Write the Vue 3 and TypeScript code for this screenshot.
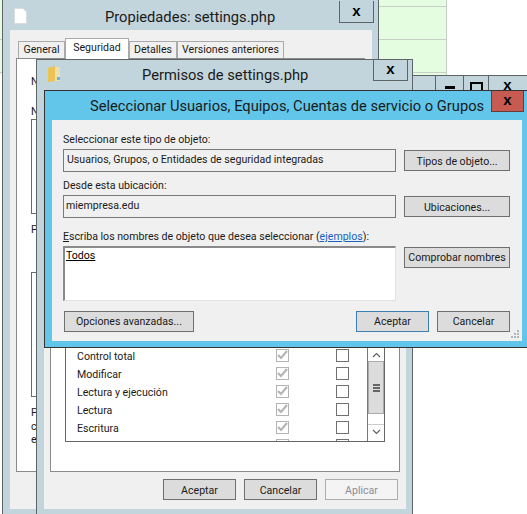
<script setup lang="ts">
const perms = [
  { name: 'Control total' },
  { name: 'Modificar' },
  { name: 'Lectura y ejecución' },
  { name: 'Lectura' },
  { name: 'Escritura' },
]
const sideLetters = [
  { text: 'N', top: 78 },
  { text: 'N', top: 108 },
  { text: 'P', top: 226 },
  { text: 'P', top: 409 },
  { text: 'c', top: 423 },
  { text: 'e', top: 436 },
]
</script>

<template>
  <div class="desktop">
    <!-- hoja de calculo detras -->
    <div class="sheet"></div>
    <div class="sheet-left"></div>

    <!-- ventana de fondo -->
    <div class="win back">
      <div class="back-btn min"><span class="min-glyph"></span></div>
      <div class="back-btn max"><span class="max-glyph"></span></div>
      <div class="back-btn cls">x</div>
    </div>

    <!-- Propiedades -->
    <div class="win props">
      <svg class="file-icon" width="13" height="16" viewBox="0 0 13 16">
        <path d="M.5.5h8.5l3.5 3.5v11.5h-12z" fill="#fff" stroke="#d8dee0" />
      </svg>
      <div class="title props-title">Propiedades: settings.php</div>
      <div class="close props-close">x</div>
      <div class="client props-client">
        <div class="tabs">
          <div class="tab t1">General</div>
          <div class="tab t2 active">Seguridad</div>
          <div class="tab t3">Detalles</div>
          <div class="tab t4">Versiones anteriores</div>
        </div>
        <div class="tab-panel"></div>
      </div>
      <div class="side-box b1"></div>
      <div class="side-box b2"></div>
      <span v-for="(l, i) in sideLetters" :key="i" class="side-letter" :style="{ top: l.top + 'px' }">{{ l.text }}</span>
    </div>

    <!-- Permisos -->
    <div class="win perm">
      <svg class="folder-icon" width="14" height="16" viewBox="0 0 14 16">
        <path d="M1 2l7-2v15l-7 1z" fill="#ecc355" />
        <path d="M8 1h5v14H8z" fill="#ecdfae" />
        <path d="M10 11h3v3h-3z" fill="#6fb4d8" />
      </svg>
      <div class="title perm-title">Permisos de settings.php</div>
      <div class="close perm-close">x</div>
      <div class="client perm-client">
        <div class="perm-panel">
          <div class="perm-list">
            <div class="rows">
              <div v-for="p in perms" :key="p.name" class="row">
                <span class="row-name">{{ p.name }}</span>
                <span class="check on">
                  <svg width="11" height="10" viewBox="0 0 11 10"><path d="M1 5l3 3 6-7" fill="none" stroke="#b4b4b4" stroke-width="2.2" /></svg>
                </span>
                <span class="check"></span>
              </div>
              <div class="row cut">
                <span class="row-name"></span>
                <span class="check on"></span>
                <span class="check"></span>
              </div>
            </div>
            <div class="scroll">
              <div class="arrow">
                <svg width="9" height="6" viewBox="0 0 9 6"><path d="M1 5l3.5-3.5L8 5" fill="none" stroke="#606060" stroke-width="1.2" /></svg>
              </div>
              <div class="thumb"><span></span><span></span><span></span></div>
              <div class="track"></div>
              <div class="arrow">
                <svg width="9" height="6" viewBox="0 0 9 6"><path d="M1 1l3.5 3.5L8 1" fill="none" stroke="#606060" stroke-width="1.2" /></svg>
              </div>
            </div>
          </div>
        </div>
        <div class="perm-buttons">
          <button class="btn w73 low">Aceptar</button>
          <button class="btn w73 low">Cancelar</button>
          <button class="btn w73 low disabled">Aplicar</button>
        </div>
      </div>
    </div>

    <!-- Seleccionar -->
    <div class="win pick">
      <div class="title pick-title">Seleccionar Usuarios, Equipos, Cuentas de servicio o Grupos</div>
      <div class="close pick-close">x</div>
      <div class="pick-client">
        <div class="pick-grid">
          <label class="lbl">Seleccionar este tipo de objeto:</label>
          <div class="field-row">
            <div class="field indent">Usuarios, Grupos, o Entidades de seguridad integradas</div>
            <button class="btn side low">Tipos de objeto...</button>
          </div>
          <label class="lbl">Desde esta ubicación:</label>
          <div class="field-row">
            <div class="field">miempresa.edu</div>
            <button class="btn side low">Ubicaciones...</button>
          </div>
          <label class="lbl third"><u>E</u>scriba los nombres de objeto que desea seleccionar (<a class="link">ejemplos</a>):</label>
          <div class="field-row tall">
            <div class="textarea"><u>Todos</u></div>
            <button class="btn side">Comprobar nombres</button>
          </div>
          <div class="pick-foot">
            <button class="btn adv">Opciones avanzadas...</button>
            <div class="foot-right">
              <button class="btn w73 focus">Aceptar</button>
              <button class="btn w73">Cancelar</button>
            </div>
          </div>
        </div>
        <svg class="grip" width="9" height="9" viewBox="0 0 9 9" fill="#b5b5b5">
          <rect x="6" y="0" width="2" height="2" /><rect x="3" y="3" width="2" height="2" /><rect x="6" y="3" width="2" height="2" />
          <rect x="0" y="6" width="2" height="2" /><rect x="3" y="6" width="2" height="2" /><rect x="6" y="6" width="2" height="2" />
        </svg>
      </div>
    </div>
  </div>
</template>

<style scoped>
.desktop {
  position: relative;
  width: 527px;
  height: 514px;
  overflow: hidden;
  background: #fff;
  font-family: Roboto, "Liberation Sans", sans-serif;
  font-size: 10.6px;
  color: #1a1a1a;
}
.sheet {
  position: absolute;
  left: 378px;
  top: -1px;
  width: 68px;
  height: 76px;
  border-right: 1px solid #c8cec8;
  background: linear-gradient(#c8cec8, #c8cec8) 0 7px / 100% 1px no-repeat,
    linear-gradient(#c8cec8, #c8cec8) 0 40px / 100% 1px no-repeat,
    linear-gradient(#c8cec8, #c8cec8) 0 73px / 100% 1px no-repeat,
    #e4fde0;
}
.sheet-left {
  position: absolute;
  left: 0;
  top: 0;
  width: 2px;
  height: 75px;
  background: linear-gradient(#c8cec8, #c8cec8) 0 39px / 100% 1px no-repeat,
    linear-gradient(#c8cec8, #c8cec8) 0 72px / 100% 1px no-repeat,
    #e4fde0;
}
.win {
  position: absolute;
  box-sizing: border-box;
  background: #c3d5dc;
  border: 1px solid #5f6468;
}
.back {
  left: 411px;
  top: 75px;
  width: 130px;
  height: 40px;
}
.back-btn {
  position: absolute;
  top: 0;
  height: 30px;
  box-sizing: border-box;
  border-left: 1px solid #5f6468;
  display: flex;
  justify-content: center;
  font-family: "Liberation Sans", sans-serif;
  font-weight: 700;
  font-size: 15px;
  line-height: 18px;
  color: #000;
}
.min { left: 23px; width: 28px; }
.max { left: 51px; width: 26px; }
.cls { left: 76px; width: 39px; padding-right: 1px; }
.min-glyph { width: 10px; height: 3px; background: #000; margin-top: 10px; }
.max-glyph { width: 9px; height: 6px; border: 2px solid #000; margin-top: 6px; }
.props {
  left: 2px;
  top: -4px;
  width: 377px;
  height: 530px;
}
.perm {
  left: 36px;
  top: 59px;
  width: 377px;
  height: 470px;
}
.pick {
  left: 44px;
  top: 90px;
  width: 490px;
  height: 258px;
  background: #62c6ea;
  border-color: #333;
}
.file-icon {
  position: absolute;
  left: 11px;
  top: 11px;
}
.folder-icon {
  position: absolute;
  left: 10px;
  top: 6px;
}
.title {
  position: absolute;
  top: 0;
  font-size: 14.7px;
  line-height: 20px;
  white-space: nowrap;
  color: #1a1a1a;
}
.props-title { left: 102px; top: 10px; }
.perm-title { left: 105px; top: 5px; }
.pick-title { left: 45px; top: 5px; }
.close {
  position: absolute;
  box-sizing: border-box;
  background: #c3d5dc;
  border: 1px solid #5f6468;
  border-top: 0;
  display: flex;
  align-items: center;
  justify-content: center;
  font-family: "Liberation Sans", sans-serif;
  font-size: 15px;
  font-weight: 700;
  color: #000;
  padding-bottom: 3px;
}
.props-close { left: 336px; top: 4px; width: 35px; height: 22px; }
.perm-close { left: 336px; top: -1px; width: 35px; height: 22px; border-top: 1px solid #5f6468; }
.pick-close {
  left: 446px;
  top: 0;
  width: 33px;
  height: 21px;
  background: #c75b52;
  border-color: #6a3a36;
}
.client {
  position: absolute;
  box-sizing: border-box;
  background: #f0f0f0;
}
.props-client {
  left: 7px;
  top: 33px;
  width: 362px;
  height: 479px;
}
.tabs {
  position: absolute;
  left: 0;
  top: 0;
}
.tab {
  position: absolute;
  box-sizing: border-box;
  top: 11px;
  height: 18px;
  background: #f0f0f0;
  border: 1px solid #aaa;
  border-bottom: 0;
  text-align: center;
  line-height: 16px;
  white-space: nowrap;
}
.t1 { left: 8px; width: 47px; }
.t2 { left: 55px; width: 64px; top: 8px; height: 21px; background: #fff; z-index: 1; line-height: 18px; }
.t3 { left: 119px; width: 48px; }
.t4 { left: 167px; width: 107px; }
.tab-panel {
  position: absolute;
  box-sizing: border-box;
  left: 6px;
  top: 28px;
  width: 349px;
  height: 414px;
  background: #fff;
  border: 1px solid #8a8a8a;
}
.side-box {
  position: absolute;
  box-sizing: border-box;
  left: 28px;
  width: 20px;
  border: 1px solid #6a6a6a;
  background: #fff;
}
.b1 { top: 122px; height: 95px; }
.b2 { top: 275px; height: 125px; }
.side-letter {
  position: absolute;
  left: 28px;
  line-height: 14px;
  background: #fff;
}
.perm-client {
  left: 7px;
  top: 31px;
  width: 362px;
  height: 418px;
}
.perm-panel {
  position: absolute;
  box-sizing: border-box;
  left: 6px;
  top: 0;
  width: 350px;
  height: 381px;
  background: #fff;
  border: 1px solid #8a8a8a;
  border-top: 0;
}
.perm-list {
  position: absolute;
  box-sizing: border-box;
  left: 14px;
  right: 14px;
  top: 0;
  height: 351px;
  border: 1px solid #666;
  border-top: 0;
  display: flex;
  justify-content: space-between;
  overflow: hidden;
}
.rows {
  padding: 256px 0 0 11px;
  flex: 1;
  min-width: 0;
}
.row {
  display: flex;
  align-items: center;
  height: 18px;
}
.row-name {
  width: 199px;
}
.check {
  box-sizing: border-box;
  width: 13px;
  height: 13px;
  border: 1px solid #707070;
  background: #fff;
  margin-right: 47px;
  display: flex;
  align-items: center;
  justify-content: center;
  position: relative;
  top: -1px;
}
.check:last-child {
  margin-right: 0;
}
.check.on {
  border-color: #b4b4b4;
}
.scroll {
  flex: none;
  width: 17px;
  display: flex;
  flex-direction: column;
  border-left: 1px solid #777;
  padding-top: 257px;
  box-sizing: border-box;
  background: #fff;
}
.arrow {
  height: 13px;
  display: flex;
  align-items: center;
  justify-content: center;
  flex: none;
}
.thumb {
  flex: none;
  height: 53px;
  box-sizing: border-box;
  background: #dcdcdc;
  border: 1px solid #aaa;
  display: flex;
  flex-direction: column;
  align-items: center;
  justify-content: center;
  gap: 1px;
}
.thumb span {
  width: 7px;
  height: 2px;
  background: #666;
}
.track {
  flex: none;
  height: 10px;
  border-bottom: 1px solid #ccc;
}
.perm-buttons {
  position: absolute;
  right: 8px;
  bottom: 9px;
  display: flex;
  gap: 8px;
}
.btn {
  box-sizing: border-box;
  height: 21px;
  padding: 0;
  background: #dcdcdc;
  border: 1px solid #707070;
  border-radius: 0;
  font: inherit;
  color: #1a1a1a;
  white-space: nowrap;
}
.low { padding-top: 2px; }
.w73 { width: 73px; }
.disabled {
  background: #f4f4f4;
  border-color: #adadad;
  color: #8c8c9a;
}
.focus { border-color: #3c7fb1; }
.pick-client {
  position: absolute;
  box-sizing: border-box;
  left: 7px;
  top: 29px;
  width: 470px;
  height: 221px;
  background: #f0f0f0;
}
.pick-grid {
  padding: 11px 12px 0 11px;
  display: flex;
  flex-direction: column;
}
.lbl {
  height: 15px;
  line-height: 17px;
  white-space: nowrap;
}
.third {
  margin-top: 6px;
  line-height: 15px;
}
.field-row {
  display: flex;
  justify-content: space-between;
  align-items: center;
  height: 23px;
  margin: 3px 0 5px;
}
.field-row:nth-of-type(n+3) {
  margin-top: 2px;
}
.tall {
  height: 55px;
  align-items: flex-start;
  margin-bottom: 10px;
}
.field {
  box-sizing: border-box;
  width: 333px;
  height: 23px;
  border: 1px solid #7a7a7a;
  padding: 0 2px;
  line-height: 20px;
}
.indent { padding-left: 3px; }
.textarea {
  box-sizing: border-box;
  width: 333px;
  height: 55px;
  background: #fff;
  border: 1px solid #e2e2e2;
  border-top: 2px solid #8a8a8a;
  border-left: 2px solid #8a8a8a;
  padding: 0 0 0 1px;
  line-height: 16px;
  color: #000;
}
.side {
  width: 106px;
}
.tall .side {
  margin-top: 1px;
}
.link {
  color: #1a5fc0;
  text-decoration: underline;
}
.pick-foot {
  display: flex;
  justify-content: space-between;
  padding-left: 1px;
}
.adv { width: 130px; }
.foot-right {
  display: flex;
  gap: 8px;
}
.grip {
  position: absolute;
  right: 2px;
  bottom: 2px;
}
</style>
